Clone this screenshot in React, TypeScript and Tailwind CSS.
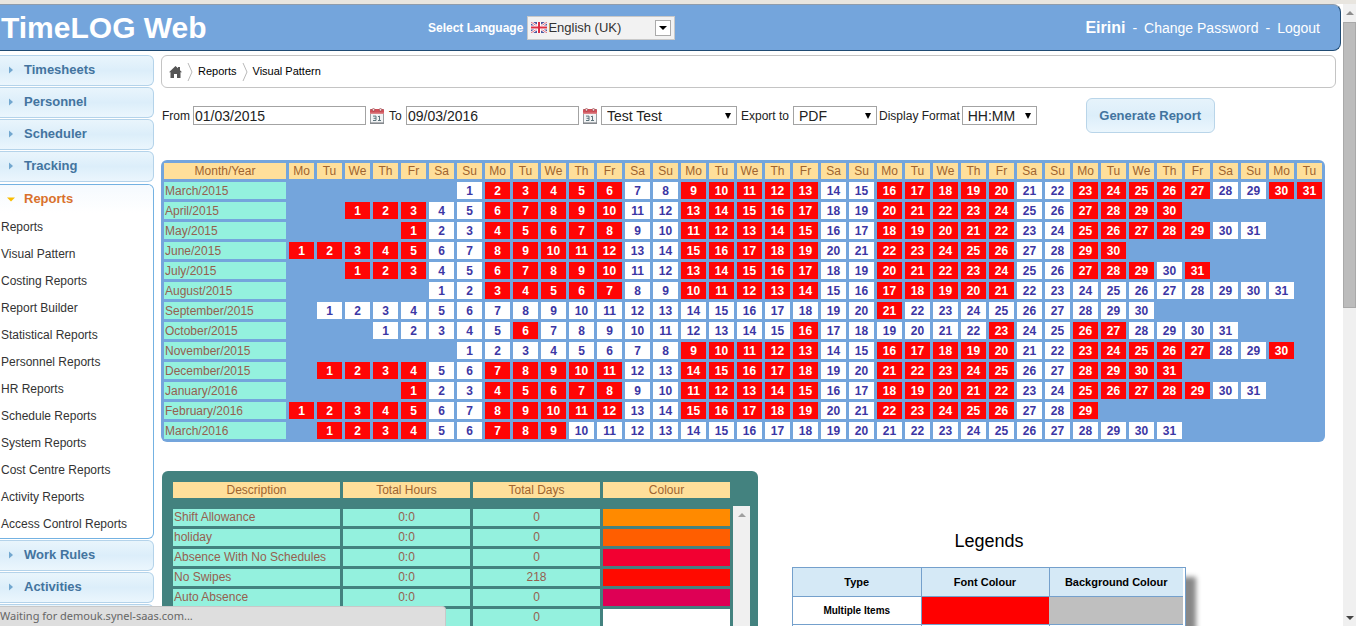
const DAY_NAMES = ["Mo", "Tu", "We", "Th", "Fr", "Sa", "Su"];
const COLUMNS = Array.from({ length: 37 }, (_, i) => DAY_NAMES[i % 7]);

type Month = { name: string; offset: number; days: number; marked: [number, number][] };

const MONTHS: Month[] = [
  { name: "March/2015", offset: 6, days: 31, marked: [[2, 6], [9, 13], [16, 20], [23, 27], [30, 31]] },
  { name: "April/2015", offset: 2, days: 30, marked: [[1, 3], [6, 10], [13, 17], [20, 24], [27, 30]] },
  { name: "May/2015", offset: 4, days: 31, marked: [[1, 1], [4, 8], [11, 15], [18, 22], [25, 29]] },
  { name: "June/2015", offset: 0, days: 30, marked: [[1, 5], [8, 12], [15, 19], [22, 26], [29, 30]] },
  { name: "July/2015", offset: 2, days: 31, marked: [[1, 3], [6, 10], [13, 17], [20, 24], [27, 29], [31, 31]] },
  { name: "August/2015", offset: 5, days: 31, marked: [[3, 7], [10, 14], [17, 21]] },
  { name: "September/2015", offset: 1, days: 30, marked: [[21, 21]] },
  { name: "October/2015", offset: 3, days: 31, marked: [[6, 6], [16, 16], [23, 23], [26, 27]] },
  { name: "November/2015", offset: 6, days: 30, marked: [[9, 13], [16, 20], [23, 27], [30, 30]] },
  { name: "December/2015", offset: 1, days: 31, marked: [[1, 4], [7, 11], [14, 18], [21, 25], [28, 31]] },
  { name: "January/2016", offset: 4, days: 31, marked: [[1, 1], [4, 8], [11, 15], [18, 22], [25, 29]] },
  { name: "February/2016", offset: 0, days: 29, marked: [[1, 5], [8, 12], [15, 19], [22, 26], [29, 29]] },
  { name: "March/2016", offset: 1, days: 31, marked: [[1, 4], [7, 9]] },
];

const REPORT_LINKS = [
  "Reports",
  "Visual Pattern",
  "Costing Reports",
  "Report Builder",
  "Statistical Reports",
  "Personnel Reports",
  "HR Reports",
  "Schedule Reports",
  "System Reports",
  "Cost Centre Reports",
  "Activity Reports",
  "Access Control Reports",
];

const TOTALS = [
  { name: "Shift Allowance", hours: "0:0", days: "0", colour: "bg-[#ff8a00]" },
  { name: "holiday", hours: "0:0", days: "0", colour: "bg-[#ff5e00]" },
  { name: "Absence With No Schedules", hours: "0:0", days: "0", colour: "bg-[#f20031]" },
  { name: "No Swipes", hours: "0:0", days: "218", colour: "bg-[#ff0a00]" },
  { name: "Auto Absence", hours: "0:0", days: "0", colour: "bg-[#de0055]" },
  { name: "", hours: "", days: "0", colour: "bg-white" },
];

function SideHeader({ label }: { label: string }) {
  return (
    <button
      type="button"
      className="flex h-[31px] w-full items-center gap-[10px] rounded-r-md border border-l-0 border-[#b4d3ea] bg-linear-to-b from-[#e9f5fc] via-[#dceefa] to-[#ebf6fd] pb-px pl-[8px] text-left text-sm font-bold text-[#43749f]"
    >
      <svg viewBox="0 0 6 8" className="h-2 w-1.5 fill-[#72a7cf]">
        <path d="M1 0.5 5 4 1 7.5Z" />
      </svg>
      <span className="text-[13px]">{label}</span>
    </button>
  );
}

function CalendarIcon() {
  return (
    <svg viewBox="0 0 14 16" className="h-4 w-3.5 shrink-0">
      <rect x="0.5" y="1.5" width="13" height="14" fill="#f1f3f4" stroke="#9a9ea2" />
      <path d="M0 6V2.5Q0 1 1.5 1H12.5Q14 1 14 2.5V6Z" fill="#cf4f58" />
      <path d="M0 5.2H14" stroke="#e39a9d" />
      <circle cx="3.5" cy="1.8" r="1.3" fill="#f3dede" stroke="#8e3339" strokeWidth="0.6" />
      <circle cx="10.5" cy="1.8" r="1.3" fill="#f3dede" stroke="#8e3339" strokeWidth="0.6" />
      <path d="M3 8.1H6V12.5H3M3.6 10.3H6M8 8.7 9.5 8.1V12.5M8 12.5H11" fill="none" stroke="#5d747c" />
      <rect x="0" y="14.4" width="14" height="1.6" fill="#85898d" />
    </svg>
  );
}

function FlagIcon() {
  return (
    <svg viewBox="0 0 16 11" className="h-[11px] w-4 shrink-0">
      <rect width="16" height="11" fill="#4d569c" />
      <path d="M0 0 16 11M16 0 0 11" stroke="#fff" strokeWidth="2.4" />
      <path d="M0 0 16 11M16 0 0 11" stroke="#d8485a" strokeWidth="0.8" />
      <path d="M8 0V11M0 5.5H16" stroke="#fff" strokeWidth="4" />
      <path d="M8 0V11M0 5.5H16" stroke="#dd2f43" strokeWidth="2" />
    </svg>
  );
}

function Chevron() {
  return (
    <svg viewBox="0 0 6 18" className="h-[18px] w-1.5 fill-none stroke-[#b9b9b9]">
      <path d="M1 0 5 9 1 18" />
    </svg>
  );
}

function PickList({ id, value, width }: { id: string; value: string; width: string }) {
  return (
    <div className={`relative flex items-center ${width}`}>
      <select
        id={id}
        aria-label={value}
        className="h-[19px] w-full appearance-none border border-[#a3a3a3] bg-white pl-[5px] font-['Liberation_Sans',Arial,sans-serif] text-sm leading-4 text-[#222]"
      >
        <option>{value}</option>
      </select>
      <svg viewBox="0 0 6 6" className="pointer-events-none absolute right-1.5 size-1.5">
        <path d="M0 0H6L3 6Z" />
      </svg>
    </div>
  );
}

function Banner() {
  return (
    <header className="flex h-[47px] items-center justify-between rounded-r-lg border border-l-0 border-[#1f4a72] border-t-[#8f9cab] bg-[#74a5dc] pr-5 text-white">
      <h1 className="w-[428px] pl-px text-3xl leading-8 font-bold">TimeLOG Web</h1>
      <div className="flex flex-1 items-center gap-1">
        <label htmlFor="language" className="text-xs font-bold">
          Select Language
        </label>
        <div className="relative flex h-6 w-[148px] items-center border border-[#c9c9c9] bg-[#f2f2f2] pl-[3px] text-[#333]">
          <FlagIcon />
          <select
            id="language"
            className="absolute inset-0 w-full appearance-none bg-transparent pl-5 text-[13px]"
          >
            <option>English (UK)</option>
          </select>
          <span className="pointer-events-none absolute right-[3px] flex size-4 items-center justify-center border border-[#aaa] bg-white">
            <svg viewBox="0 0 8 4" className="h-1 w-2">
              <path d="M0 0H8L4 4Z" />
            </svg>
          </span>
        </div>
      </div>
      <nav className="flex items-baseline gap-[7px] text-sm">
        <span className="text-base font-bold">Eirini</span>
        <span>-</span>
        <a href="#password">Change Password</a>
        <span>-</span>
        <a href="#logout">Logout</a>
      </nav>
    </header>
  );
}

function Sidebar() {
  return (
    <aside className="flex w-[154px] shrink-0 flex-col gap-px">
      <SideHeader label="Timesheets" />
      <SideHeader label="Personnel" />
      <SideHeader label="Scheduler" />
      <SideHeader label="Tracking" />
      <section className="mt-px rounded-r-md border border-l-0 border-[#74b2e2] bg-white pb-px">
        <button
          type="button"
          className="flex h-7 w-full items-center gap-[9px] rounded-tr-md bg-linear-to-b from-[#f5fafe] to-white pl-[7px] text-left text-[13px] font-bold text-[#d9712c]"
        >
          <svg viewBox="0 0 8 5" className="h-[5px] w-2 fill-[#f9bd01]">
            <path d="M0 0.5H8L4 4.5Z" />
          </svg>
          Reports
        </button>
        <ul className="text-xs text-[#333]">
          {REPORT_LINKS.map((link) => (
            <li key={link} className="flex h-[27px] items-center pl-px">
              <a href="#report">{link}</a>
            </li>
          ))}
        </ul>
      </section>
      <SideHeader label="Work Rules" />
      <SideHeader label="Activities" />
      <SideHeader label="" />
    </aside>
  );
}

function Breadcrumbs() {
  return (
    <nav className="mr-[5px] flex h-[33px] items-center gap-[5px] rounded-md border border-[#c4c4c4] pl-[7px] text-[11px] text-black">
      <a href="#home" aria-label="Home">
        <svg viewBox="0 0 13 12" className="h-3 w-[13px] fill-[#555]">
          <path d="M6.5 0 9 2.3V1H11V4.2L13 6.2H11.5V12H8V8H5V12H1.5V6.2H0Z" />
        </svg>
      </a>
      <Chevron />
      <a href="#reports">Reports</a>
      <Chevron />
      <a href="#visual-pattern">Visual Pattern</a>
    </nav>
  );
}

function Filters() {
  const box =
    "h-[19px] w-[173px] border border-[#a3a3a3] bg-white pl-px text-sm leading-4 text-[#222]";
  return (
    <form className="mt-[10px] flex h-[35px] items-center pl-px text-xs text-[#222]">
      <label htmlFor="from" className="w-[31px] shrink-0">From</label>
      <input id="from" defaultValue="01/03/2015" className={box} />
      <button type="button" aria-label="Pick start date" className="mx-1">
        <CalendarIcon />
      </button>
      <label htmlFor="to" className="w-[18px] shrink-0 pl-px">To</label>
      <input id="to" defaultValue="09/03/2016" className={box} />
      <button type="button" aria-label="Pick end date" className="mx-1">
        <CalendarIcon />
      </button>
      <PickList id="employee" value="Test Test" width="w-[136px]" />
      <label htmlFor="export" className="shrink-0 px-1">Export to</label>
      <PickList id="export" value="PDF" width="w-[84px]" />
      <label htmlFor="format" className="shrink-0 px-[2px]">Display Format</label>
      <PickList id="format" value="HH:MM" width="w-[75px]" />
      <button
        type="button"
        className="ml-[49px] h-[35px] w-[129px] shrink-0 rounded-md border border-[#b9d5e9] bg-linear-to-b from-[#e6f3fb] via-[#dceefa] to-[#ebf6fd] text-[13px] font-bold text-[#43749f]"
      >
        Generate Report
      </button>
    </form>
  );
}

function PatternTable() {
  return (
    <div className="mt-[27px] mr-4 w-[1164px] rounded-md bg-[#74a5dc]">
      <table className="w-full table-fixed border-separate border-spacing-[3px] text-xs">
        <thead>
          <tr className="leading-4 text-[#a0642f]">
            <th className="h-4 w-[122px] bg-[#ffdf9a] p-0 font-normal">Month/Year</th>
            {COLUMNS.map((day, i) => (
              <th key={i} className="bg-[#ffdf9a] p-0 font-normal">{day}</th>
            ))}
          </tr>
        </thead>
        <tbody className="leading-4">
          {MONTHS.map((month) => (
            <tr key={month.name}>
              <th className="h-[17px] bg-[#94f1de] p-0 pl-px text-left font-normal text-[#96604f]">{month.name}</th>
              {COLUMNS.map((_, i) => {
                const day = i - month.offset + 1;
                if (day < 1 || day > month.days) return <td key={i} className="p-0" />;
                const marked = month.marked.some(([a, b]) => day >= a && day <= b);
                return (
                  <td
                    key={i}
                    className={
                      marked
                        ? "bg-[#ff0505] p-0 text-center font-bold text-white"
                        : "bg-white p-0 text-center font-bold text-[#3c36a4]"
                    }
                  >
                    {day}
                  </td>
                );
              })}
            </tr>
          ))}
        </tbody>
      </table>
    </div>
  );
}

function Totals() {
  const grid = "grid grid-cols-[167px_127px_127px_127px] gap-x-[3px]";
  return (
    <section className="ml-px w-[596px] rounded-t-md bg-[#43827f] pt-[11px] pr-2 pl-[11px] text-xs text-[#96604f]">
      <table className="block">
        <thead className="block">
          <tr className={`${grid} leading-4 text-[#a0642f]`}>
            {["Description", "Total Hours", "Total Days", "Colour"].map((h) => (
              <th key={h} className="h-4 bg-[#ffdf9a] font-normal">{h}</th>
            ))}
          </tr>
        </thead>
        <tbody className="relative mt-2 grid gap-[3px] pt-[3px]">
          {TOTALS.map((row, i) => (
            <tr key={i} className={`${grid} leading-4`}>
              <td className="h-[17px] bg-[#94f1de] pl-px">{row.name}</td>
              <td className="bg-[#94f1de] text-center">{row.hours}</td>
              <td className="bg-[#94f1de] text-center">{row.days}</td>
              <td className={row.colour} />
            </tr>
          ))}
          <tr className="absolute inset-y-0 right-0 w-[17px] bg-[#f0f0f0]">
            <td className="flex justify-center pt-[7px]">
              <svg viewBox="0 0 8 4" className="h-1 w-2 fill-[#a0a0a0]">
                <path d="M4 0 8 4H0Z" />
              </svg>
            </td>
          </tr>
        </tbody>
      </table>
    </section>
  );
}

function Legends() {
  return (
    <section className="mt-[59px] ml-[34px] w-[394px]">
      <h2 className="text-center text-lg leading-[22px] text-black">Legends</h2>
      <div className="mt-[15px] border border-[#74a0cc] bg-white pr-[2px] shadow-[10px_10px_5px_#888]">
        <table className="w-full table-fixed border-collapse text-black">
          <thead>
            <tr className="h-7 bg-[#d5e9f6] text-[11px]">
              <th className="w-[128px] border-b border-[#74a0cc]">Type</th>
              <th className="w-[128px] border-b border-l border-[#74a0cc]">Font Colour</th>
              <th className="border-b border-l border-[#74a0cc]">Background Colour</th>
            </tr>
          </thead>
          <tbody>
            <tr className="h-7 text-[10px]">
              <th className="border-b border-[#74a0cc]">Multiple Items</th>
              <td className="border-b border-l border-[#74a0cc] bg-[#ff0000]" />
              <td className="border-b border-[#74a0cc] bg-[#bfbfbf]" />
            </tr>
            <tr className="h-7">
              <td />
              <td className="border-l border-[#74a0cc]" />
              <td className="border-l border-[#74a0cc]" />
            </tr>
          </tbody>
        </table>
      </div>
    </section>
  );
}

function PageScrollbar() {
  return (
    <div className="flex w-[13px] shrink-0 flex-col bg-[#f0f0f0]">
      <div className="flex h-[18px] items-center justify-center">
        <svg viewBox="0 0 8 4" className="h-1 w-2 fill-[#8d8d8d]">
          <path d="M4 0 8 4H0Z" />
        </svg>
      </div>
      <div className="h-[46%] border border-[#a9a9a9] bg-[#bcbcbc]" />
      <div className="mt-auto flex h-4 items-center justify-center">
        <svg viewBox="0 0 8 4" className="h-1 w-2 fill-[#444]">
          <path d="M0 0H8L4 4Z" />
        </svg>
      </div>
    </div>
  );
}

export default function App() {
  return (
    <div className="relative flex h-screen flex-col overflow-hidden bg-white font-['Liberation_Sans',Arial,sans-serif]">
      <div className="h-1 shrink-0 bg-[#e8e5df]" />
      <div className="flex min-h-0 flex-1">
        <div className="min-w-0 flex-1 overflow-hidden">
          <div className="mr-[2px]">
            <Banner />
            <div className="mt-1 flex gap-[7px]">
              <Sidebar />
              <main className="min-w-0 flex-1">
                <Breadcrumbs />
                <Filters />
                <PatternTable />
                <div className="mt-[29px] flex items-start">
                  <Totals />
                  <Legends />
                </div>
              </main>
            </div>
          </div>
        </div>
        <PageScrollbar />
      </div>
      <div className="absolute bottom-0 left-0 flex h-5 w-[446px] items-center rounded-tr border-t border-r border-[#c8c8c8] bg-[#dedede] font-['Noto_Sans',sans-serif] text-[11px] text-[#666]">
        Waiting for demouk.synel-saas.com...
      </div>
    </div>
  );
}
